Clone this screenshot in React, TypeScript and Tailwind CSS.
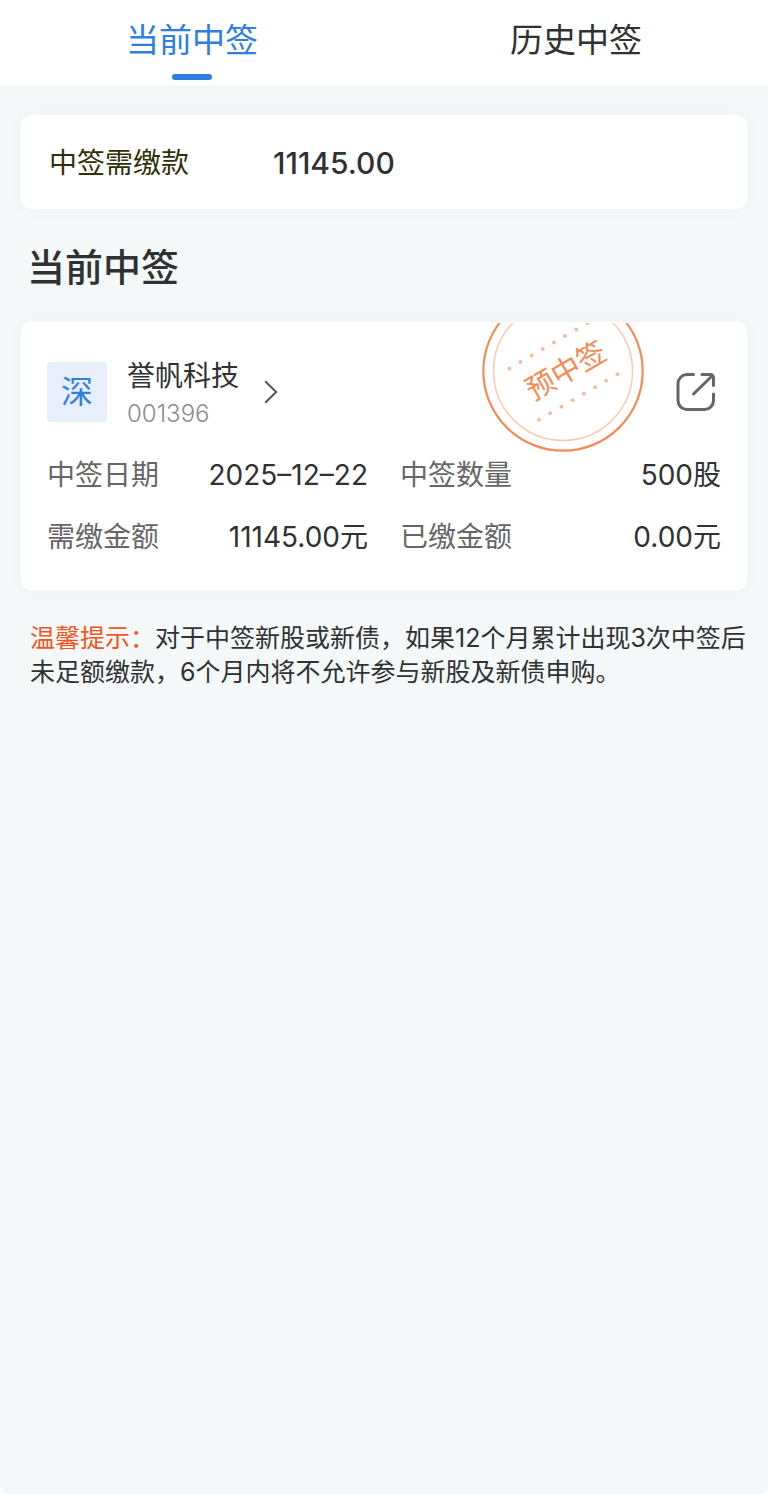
import React from "react";

const details = [
  { label: "中签日期", value: "2025–12–22" },
  { label: "中签数量", value: "500股" },
  { label: "需缴金额", value: "11145.00元" },
  { label: "已缴金额", value: "0.00元" },
];

const stampDots = [0, 1, 2, 3, 4, 5, 6, 7];

function Tab({ label, active = false }: { label: string; active?: boolean }) {
  return (
    <button
      type="button"
      role="tab"
      aria-selected={active}
      className={
        active
          ? "flex flex-1 flex-col items-center pt-4 text-[33px] leading-[48px] text-[#2f7ee0]"
          : "flex flex-1 flex-col items-center pt-4 text-[33px] leading-[48px] text-[#303133]"
      }
    >
      {label}
      {active && <span className="mt-[10px] h-[6px] w-10 rounded-full bg-[#2f7ee0]" />}
    </button>
  );
}

function Stamp() {
  return (
    <svg
      viewBox="0 0 164 132"
      className="pointer-events-none absolute top-0 right-[102px] h-[132px] w-[164px]"
    >
      <g transform="translate(82 49)">
        <g fill="none" stroke="#f58a55">
          <circle r="79.7" strokeWidth="2.2" />
          <circle r="69.5" strokeWidth="1.5" strokeOpacity="0.45" />
        </g>
        <g fill="#f58a55" fillOpacity="0.6">
          {stampDots.map((i) => (
            <circle key={i} cx={-53.7 + i * 11.15} cy={-2.5 - i * 6.5} r="1.9" />
          ))}
          {stampDots.map((i) => (
            <circle key={i} cx={-24 + i * 11.2} cy={48.7 - i * 6.5} r="1.9" />
          ))}
        </g>
        <text
          transform="translate(2.5 -1) rotate(-30)"
          y="11"
          textAnchor="middle"
          fontSize="29"
          fill="#f58a55"
        >
          预中签
        </text>
      </g>
      <rect width="164" height="1" fill="#fff" />
    </svg>
  );
}

function ShareIcon() {
  return (
    <svg
      viewBox="0 0 40 40"
      className="size-10"
      fill="none"
      stroke="#666"
      strokeWidth="3"
      strokeLinecap="round"
      strokeLinejoin="round"
    >
      <path d="M17.5 2.6H11A9 9 0 0 0 2 11.6V28.5A9 9 0 0 0 11 37.5H28.5A9 9 0 0 0 37.5 28.5V22" />
      <path d="M26 2.6H34.5A3 3 0 0 1 37.5 5.6V13.5" />
      <path d="M17.5 22L36 4" />
    </svg>
  );
}

export default function App() {
  return (
    <div className="min-h-screen bg-white font-['Inter','Noto_Sans_CJK_SC',sans-serif] text-[#303133]">
      <div className="flex min-h-screen flex-col rounded-b-lg bg-[#f4f8f9]">
        <header role="tablist" className="flex h-[85px] bg-white">
          <Tab label="当前中签" active />
          <Tab label="历史中签" />
        </header>
        <main className="px-[21px] pt-[30px]">
          <section className="flex items-center rounded-[10px] bg-white px-7 pt-6 pb-[22px] leading-[48px] shadow-[0_0_16px_rgba(40,70,80,0.04)]">
            <span className="w-[224px] text-[28px] text-[#303008]">中签需缴款</span>
            <span className="text-[30px] font-medium">11145.00</span>
          </section>

          <h1 className="mt-[30px] mb-[26px] px-[6px] text-[38px] leading-[57px] font-medium">当前中签</h1>

          <section className="relative overflow-hidden rounded-[10px] bg-white px-[26px] pt-8 pb-[22px] shadow-[0_0_16px_rgba(40,70,80,0.04)]">
            <Stamp />
            <div className="flex items-center justify-between pr-[5px]">
              <a href="#001396" className="flex items-center">
                <span className="flex size-[60px] items-center justify-center rounded bg-[#e6effb] text-[32px] text-[#2f7ee0]">
                  深
                </span>
                <span className="ml-5 flex flex-col pt-px">
                  <span className="text-[28px] leading-[42px]">誉帆科技</span>
                  <span className="text-[24px] leading-[33px] font-light text-[#8c8c8c]">001396</span>
                </span>
                <svg viewBox="0 0 14 24" className="ml-[25px] h-6 w-[14px]" fill="none" stroke="#555" strokeWidth="2">
                  <path d="M1.2 1.2L12.2 12L1.2 22.8" />
                </svg>
              </a>
              <button type="button" aria-label="分享">
                <ShareIcon />
              </button>
            </div>
            <dl className="mt-[14px] grid grid-cols-2 gap-x-8 text-[28px] leading-[62px]">
              {details.map((item) => (
                <div key={item.label} className="flex justify-between">
                  <dt className="text-[#666]">{item.label}</dt>
                  <dd>{item.value}</dd>
                </div>
              ))}
            </dl>
          </section>

          <p className="-mr-3 mt-[31px] pl-[9px] text-[25px] leading-[34px]">
            <span className="inline-block text-[#f0561d]">温馨提示：</span>
            对于中签新股或新债，如果12个月累计出现3次中签后未足额缴款，6个月内将不允许参与新股及新债申购。
          </p>
        </main>
      </div>
    </div>
  );
}
